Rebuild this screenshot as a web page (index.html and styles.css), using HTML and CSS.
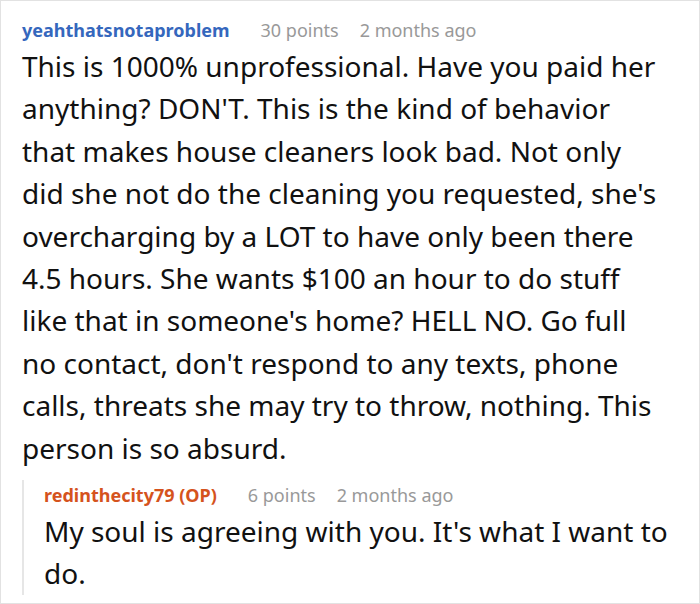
FILE: index.html
```html
<!DOCTYPE html>
<html>
<head>
<meta charset="utf-8">
<link rel="stylesheet" href="styles.css">
</head>
<body>
<div class="frame">
  <div class="comment">
    <div class="meta">
      <span class="user">yeahthatsnotaproblem</span>
      <span class="info">30 points</span>
      <span class="info">2 months ago</span>
    </div>
    <p class="body">This is 1000% unprofessional. Have you paid her anything? DON'T. This is the kind of behavior that makes house cleaners look bad. Not only did she not do the cleaning you requested, she's overcharging by a LOT to have only been there 4.5 hours. She wants $100 an hour to do stuff like that in someone's home? HELL NO. Go full no contact, don't respond to any texts, phone calls, threats she may try to throw, nothing. This person is so absurd.</p>
    <div class="reply">
      <div class="meta">
        <span class="user op">redinthecity79 (OP)</span>
        <span class="info">6 points</span>
        <span class="info">2 months ago</span>
      </div>
      <p class="body">My soul is agreeing with you. It's what I want to do.</p>
    </div>
  </div>
</div>
</body>
</html>
```

FILE: styles.css
```css
html, body {
  margin: 0;
  padding: 0;
  background: #fff;
}
body {
  font-family: "Noto Sans", "Open Sans", sans-serif;
  color: #111;
}
.frame {
  width: 698px;
  height: 602px;
  border: 1px solid #e2e2e2;
  overflow: hidden;
}
.comment {
  padding: 14px 37px 0 21px;
}
.meta {
  display: flex;
  align-items: baseline;
  font-size: 18px;
  line-height: 30px;
}
.user {
  font-weight: 700;
  color: #3567bd;
  margin-right: 31px;
}
.user.op {
  color: #d5531d;
}
.info {
  color: #999;
  margin-right: 21px;
}
.body {
  margin: 0;
  font-size: 28px;
  line-height: 42.4px;
}
.reply {
  margin-top: 11px;
  margin-right: -20px;
  border-left: 2px solid #e6e6e6;
  padding-left: 20px;
}
```
